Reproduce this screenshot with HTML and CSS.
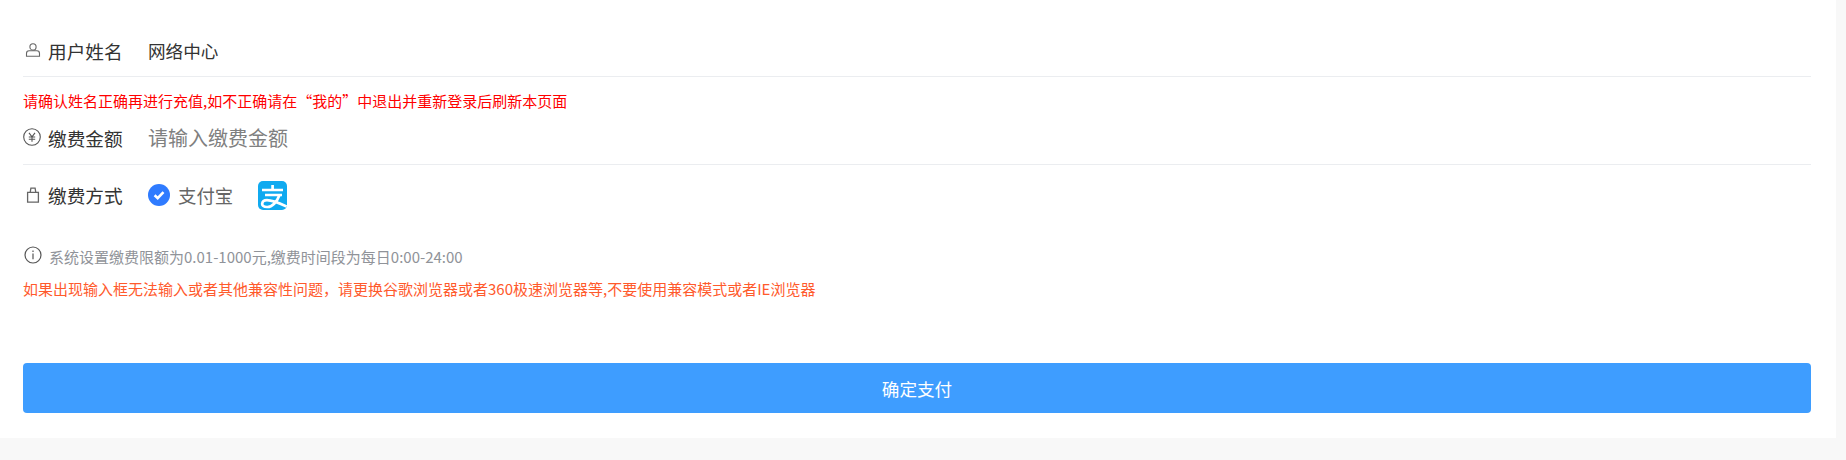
FILE: index.html
```html
<!DOCTYPE html>
<html lang="zh-CN">
<head>
   <meta charset="UTF-8">
   <meta name="viewport" content="width=device-width, initial-scale=1.0">
   <title>缴费</title>
   <link rel="stylesheet" href="styles.css">
</head>
<body>
   <div class="pay-panel">
      <div class="form-row name-row">
         <svg class="row-icon" width="18" height="18" viewBox="0 0 18 18" fill="none" stroke="#666" stroke-width="1.1">
            <circle cx="10" cy="5.9" r="3.1"/>
            <path d="M3.5 15.3v-2.9c0-1.5 1.1-2.6 2.6-2.6h7.8c1.5 0 2.6 1.1 2.6 2.6v2.9z"/>
         </svg>
         <span class="row-label">用户姓名</span>
         <span class="row-value">网络中心</span>
      </div>
      <p class="notice-red">请确认姓名正确再进行充值,如不正确请在“我的”中退出并重新登录后刷新本页面</p>
      <div class="form-row amount-row">
         <svg class="row-icon" width="18" height="18" viewBox="0 0 18 18" fill="none" stroke="#555" stroke-width="1.1">
            <circle cx="9" cy="9" r="8.3"/>
            <path d="M6 4.8l3 4 3-4M5.8 9h6.4M5.8 11.3h6.4M9 8.8v5"/>
         </svg>
         <span class="row-label">缴费金额</span>
         <input class="amount-input" type="text" placeholder="请输入缴费金额">
      </div>
      <div class="form-row method-row">
         <svg class="row-icon" width="18" height="18" viewBox="0 0 18 18" fill="none" stroke="#666" stroke-width="1.3">
            <path d="M4.6 6.4h10.8v9.8H4.6zM7.2 6.4L7.9 2.2h4.2l.7 4.2"/>
         </svg>
         <span class="row-label">缴费方式</span>
         <svg class="check-icon" width="22" height="22" viewBox="0 0 22 22">
            <circle cx="11" cy="11" r="11" fill="#2f7bff"/>
            <path d="M6.6 11.2l3.1 3 5.8-6" fill="none" stroke="#fff" stroke-width="2.6"/>
         </svg>
         <span class="method-name">支付宝</span>
         <svg class="alipay-logo" width="29" height="29" viewBox="0 0 29 29">
            <rect width="29" height="29" rx="5" fill="#10aaf0"/>
            <path d="M4 9h21M14.6 4v5M7 14h17" fill="none" stroke="#fff" stroke-width="2.7"/>
            <path d="M21.5 14C19 21 14 26.3 9 26C5.5 26 4 24.5 4.2 22.7C4.4 20.5 6.5 19.2 9 19.2C14 19.2 22 22.5 28.7 25.5" fill="none" stroke="#fff" stroke-width="2.7"/>
         </svg>
      </div>
      <div class="limit-line">
         <svg class="row-icon" width="18" height="18" viewBox="0 0 18 18" fill="none" stroke="#555" stroke-width="1.2">
            <circle cx="9" cy="9" r="8"/>
            <path d="M9 7.6v5.6M9 4.4v1.6"/>
         </svg>
         <span>系统设置缴费限额为0.01-1000元,缴费时间段为每日0:00-24:00</span>
      </div>
      <p class="notice-orange">如果出现输入框无法输入或者其他兼容性问题，请更换谷歌浏览器或者360极速浏览器等,不要使用兼容模式或者IE浏览器</p>
      <button type="button" class="pay-button">确定支付</button>
   </div>
</body>
</html>
```

FILE: styles.css
```css
body {
   font-family: "Noto Sans CJK SC", "Noto Sans", sans-serif;
   background-color: #f8f8f8;
   margin: 0;
   height: 460px;
   overflow: hidden;
}
.pay-panel {
   background-color: #fff;
   width: 1836px;
   height: 438px;
   box-sizing: border-box;
   padding: 27px 25px 0 23px;
}
.form-row {
   display: flex;
   align-items: center;
   color: #333;
}
.name-row {
   height: 47px;
   padding-bottom: 2px;
   border-bottom: 1px solid #ebedf0;
}
.amount-row {
   height: 48px;
   padding-bottom: 3px;
   border-bottom: 1px solid #ebedf0;
}
.method-row {
   height: 59px;
}
.row-icon {
   flex: none;
   margin-right: 7px;
}
.name-row .row-icon {
   margin-top: -2px;
}
.row-label {
   width: 100px;
   flex: none;
   font-size: 18.67px;
}
.row-value {
   font-size: 17.6px;
}
.amount-input {
   border: none;
   outline: none;
   padding: 0;
   font-family: inherit;
   font-size: 20px;
   color: #333;
   flex: 1;
}
.amount-input::placeholder {
   color: #808080;
}
.check-icon {
   margin-right: 8px;
}
.method-name {
   font-size: 18.4px;
   color: #666;
}
.alipay-logo {
   margin-left: 25px;
   margin-top: 1px;
}
.notice-red {
   margin: 0;
   padding-top: 13px;
   height: 23px;
   line-height: 21px;
   font-size: 15px;
   color: #f00;
}
.limit-line {
   display: flex;
   align-items: center;
   margin-top: 20px;
   height: 24px;
   padding-left: 1px;
   font-size: 15px;
   color: #909399;
}
.limit-line .row-icon {
   margin-top: -3px;
   margin-right: 7px;
}
.notice-orange {
   margin: 9px 0 0;
   line-height: 24px;
   font-size: 15px;
   color: #ff5a2c;
}
.pay-button {
   display: block;
   width: 100%;
   height: 50px;
   margin-top: 62px;
   background-color: #3e9dff;
   color: #fff;
   border: none;
   border-radius: 4px;
   font-family: inherit;
   font-size: 17.6px;
   cursor: pointer;
}
```
